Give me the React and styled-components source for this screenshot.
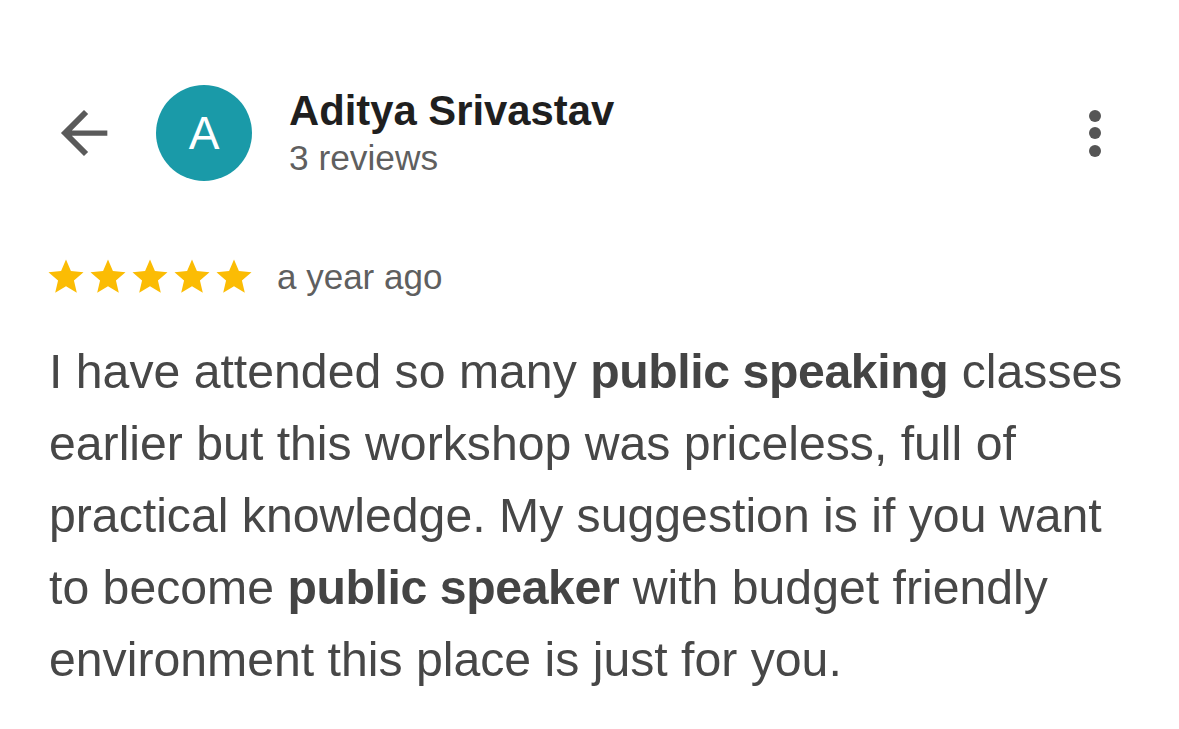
import React from 'react';
import styled, { createGlobalStyle } from 'styled-components';

const Global = createGlobalStyle`
  body {
    margin:0;
    background:#fff;
    font-family:"Liberation Sans", Arial, sans-serif;
  }
`;

const Page = styled.main`
  width:1179px;
  height:729px;
  box-sizing:border-box;
  padding:85px 78px 0 45px;
  background:#fff;
  overflow:hidden;
`;

const Header = styled.header`
  display:flex;
  align-items:center;
  height:96px;
`;

const BackButton = styled.button`
  display:flex;
  align-items:center;
  justify-content:center;
  width:70px;
  height:70px;
  margin-left:4px;
  padding:0;
  border:none;
  background:none;
  color:#5a5a5a;
`;

const Avatar = styled.div`
  width:96px;
  height:96px;
  margin-left:37px;
  border-radius:50%;
  background:#1a9aa8;
  color:#fff;
  font-size:46px;
  display:flex;
  align-items:center;
  justify-content:center;
`;

const Who = styled.div`
  display:flex;
  flex-direction:column;
  align-self:flex-start;
  margin-left:37px;
  margin-top:2px;
`;

const Name = styled.h1`
  margin:0;
  font-size:41.8px;
  line-height:48px;
  font-weight:700;
  color:#1f1f1f;
`;

const Count = styled.div`
  margin-top:3px;
  font-size:35.3px;
  line-height:40px;
  color:#5f5f5f;
`;

const MoreButton = styled.button`
  margin-left:auto;
  display:flex;
  flex-direction:column;
  align-items:center;
  gap:5.5px;
  padding:0;
  border:none;
  background:none;
`;

const Dot = styled.span`
  width:12px;
  height:12px;
  border-radius:50%;
  background:#555;
`;

const Meta = styled.div`
  display:flex;
  align-items:center;
  margin-top:75px;
  height:42px;
`;

const Stars = styled.div`
  display:flex;
`;

const Ago = styled.span`
  margin-left:22px;
  font-size:35px;
  color:#5f5f5f;
`;

const Body = styled.p`
  margin:37px 0 0 4px;
  width:1090px;
  font-size:48.2px;
  line-height:72px;
  color:#474747;

  b {
    font-weight:700;
    letter-spacing:-0.4px;
    color:#444;
  }
`;

function Star() {
  return (
    <svg width="42" height="42" viewBox="0 0 24 24">
      <path fill="#fbbc04" d="M12 17.27L18.18 21l-1.64-7.03L22 9.24l-7.19-.61L12 2 9.19 8.63 2 9.24l5.46 4.73L5.82 21z" />
    </svg>
  );
}

export default function App() {
  return (
    <>
      <Global />
      <Page>
        <Header>
          <BackButton aria-label="Back">
            <svg width="70" height="70" viewBox="0 0 24 24">
              <path fill="currentColor" d="M20 11.1H7.83l5.59-5.59L12 4.1l-7.9 7.9 7.9 7.9 1.41-1.41L7.83 12.9H20v-1.8z" />
            </svg>
          </BackButton>
          <Avatar>A</Avatar>
          <Who>
            <Name>Aditya Srivastav</Name>
            <Count>3 reviews</Count>
          </Who>
          <MoreButton aria-label="More">
            <Dot />
            <Dot />
            <Dot />
          </MoreButton>
        </Header>
        <Meta>
          <Stars>
            {[0, 1, 2, 3, 4].map((i) => <Star key={i} />)}
          </Stars>
          <Ago>a year ago</Ago>
        </Meta>
        <Body>
          I have attended so many <b>public speaking</b> classes earlier but this workshop was priceless, full of practical knowledge. My suggestion is if you want to become <b>public speaker</b> with budget friendly environment this place is just for you.
        </Body>
      </Page>
    </>
  );
}
